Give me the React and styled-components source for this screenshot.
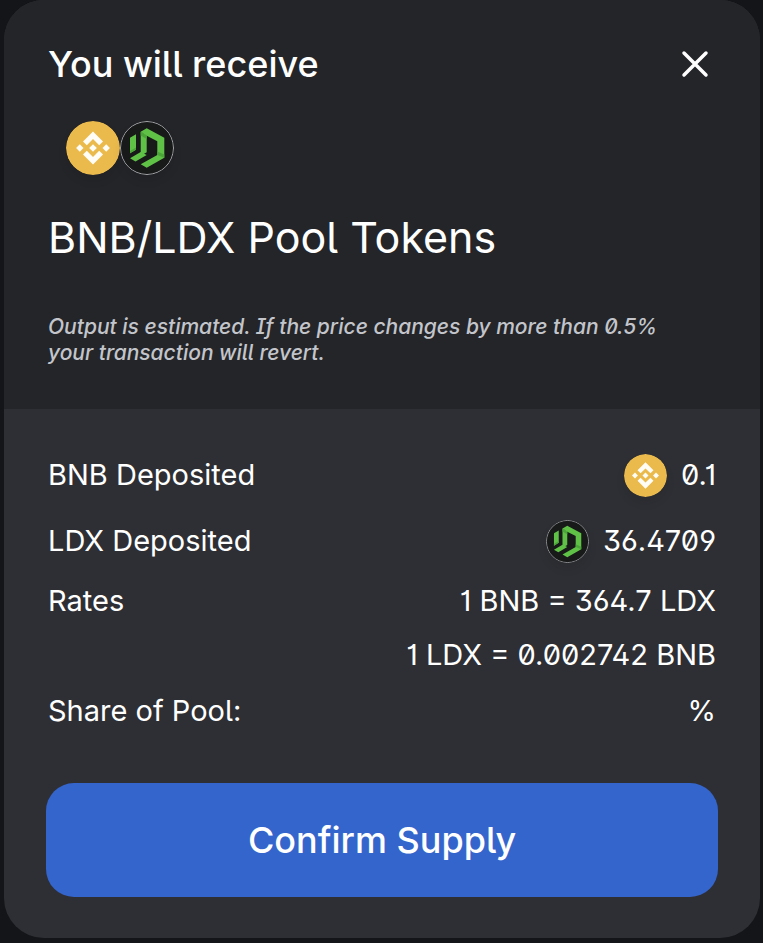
import React from "react";
import styled, { createGlobalStyle } from "styled-components";

const GlobalStyle = createGlobalStyle`
  * { box-sizing: border-box; }
  body {
    margin: 0;
    background: #141519;
    color: #ffffff;
    font-family: Inter, sans-serif;
    font-feature-settings: "ss01" 1, "ss02" 1, "cv01" 1, "cv03" 1;
  }
`;

const Dialog = styled.section`
  margin: 0 3px 4px 4px;
  border-radius: 40px;
  overflow: hidden;
  background: #2e2f34;
`;

const Summary = styled.div`
  padding: 42px 44px 43px;
  background: #242529;
`;

const Header = styled.header`
  display: flex;
  align-items: center;
  justify-content: space-between;
`;

const Title = styled.h1`
  margin: 0;
  font-size: 36px;
  line-height: 44px;
  font-weight: 500;
`;

const CloseButton = styled.button`
  display: flex;
  padding: 0;
  border: 0;
  background: none;
  color: inherit;
  cursor: pointer;
`;

const LogoPair = styled.div`
  display: flex;
  padding: 35px 18px 0;
`;

const Logo = styled.svg`
  display: block;
  flex: none;
  width: ${(p) => p.$size}px;
  height: ${(p) => p.$size}px;
  border-radius: 50%;
  box-shadow: 0 6px 10px rgba(0, 0, 0, 0.08);
`;

const PoolName = styled.h2`
  margin: 35px 0 0;
  font-size: 43px;
  line-height: 54px;
  font-weight: 400;
`;

const Note = styled.p`
  margin: 50px 0 0;
  padding-right: 24px;
  color: #c3c5cb;
  font-size: 21px;
  line-height: 26px;
  font-weight: 500;
  font-style: italic;
`;

const Details = styled.div`
  padding: 40px 42px 41px;
`;

const Rows = styled.dl`
  display: grid;
  gap: 14px;
  margin: 0 2px;
  font-size: 29px;
  line-height: 40px;
`;

const rowHeights = { tall: 52, medium: 44 };

const Row = styled.div`
  display: flex;
  justify-content: space-between;
  align-items: ${(p) => (p.$top ? "flex-start" : "center")};
  min-height: ${(p) => rowHeights[p.$height] || 40}px;
`;

const Label = styled.dt`
  margin: 0;
`;

const Values = styled.dd`
  display: grid;
  gap: 14px;
  margin: 0;
  text-align: right;
`;

const Amount = styled.span`
  display: flex;
  align-items: center;
  gap: 14px;
`;

const ConfirmButton = styled.button`
  display: block;
  width: 100%;
  margin-top: 50px;
  padding: 35px 16px;
  border: 0;
  border-radius: 28px;
  background: #3465cd;
  color: #ffffff;
  font: inherit;
  font-feature-settings: inherit;
  font-size: 36px;
  line-height: 44px;
  font-weight: 500;
  cursor: pointer;
`;

function BnbLogo({ size }) {
  return (
    <Logo $size={size} viewBox="0 0 54 54" aria-hidden="true">
      <circle cx="27" cy="27" r="27" fill="#ebba4d" />
      <g fill="#fffdf5">
        <path d="M27 10.5 37 20.5 33.2 24.3 27 18.1 20.8 24.3 17 20.5Z" />
        <path d="M27 43.5 37 33.5 33.2 29.7 27 35.9 20.8 29.7 17 33.5Z" />
        <path d="m27 23.2 3.8 3.8-3.8 3.8-3.8-3.8Z" />
        <path d="m13.8 23.3 3.7 3.7-3.7 3.7-3.7-3.7Z" />
        <path d="m40.2 23.3 3.7 3.7-3.7 3.7-3.7-3.7Z" />
      </g>
    </Logo>
  );
}

function LdxLogo({ size }) {
  return (
    <Logo $size={size} viewBox="0 0 54 54" aria-hidden="true">
      <circle cx="27" cy="27" r="26.5" fill="#181a1a" stroke="#a9aaad" />
      <g fill="#5fc146">
        <path d="M10 16.7 16 13.3V28.7L10 32.3Z" />
        <path d="M20.7 10.7 26.7 14.2V31.3L20.7 34.7Z" />
        <path d="M20.7 10.7 26.7 7.3 44.3 16.7V36.7L26.7 46.7 20.7 43.3 37.3 34V20.2L26.7 14.7Z" />
        <path d="M10 37.3 20.7 31.1 26.7 34 15.5 40.5Z" />
      </g>
      <path d="m20.7 10.7 6 4v3.3l-6-3.5Z" fill="#4aa637" />
      <path d="m37.3 30.5 7 3v3.2l-7-2.7Z" fill="#4aa637" />
      <path d="m10 30 6-3.5v2.2l-6 3.6Z" fill="#4aa637" />
    </Logo>
  );
}

export default function App() {
  return (
    <>
      <GlobalStyle />
      <Dialog role="dialog" aria-labelledby="dialog-title">
        <Summary>
          <Header>
            <Title id="dialog-title">You will receive</Title>
            <CloseButton type="button" aria-label="Close">
              <svg width="42" height="42" viewBox="0 0 42 42" fill="none" stroke="currentColor" strokeWidth="3.5" strokeLinecap="round">
                <path d="m10 10 22 22m0-22-22 22" />
              </svg>
            </CloseButton>
          </Header>
          <LogoPair>
            <BnbLogo size={54} />
            <LdxLogo size={54} />
          </LogoPair>
          <PoolName>BNB/LDX Pool Tokens</PoolName>
          <Note>
            Output is estimated. If the price changes by more than 0.5% your
            transaction will revert.
          </Note>
        </Summary>
        <Details>
          <Rows>
            <Row $height="tall">
              <Label>BNB Deposited</Label>
              <Values>
                <Amount>
                  <BnbLogo size={43} />
                  0.1
                </Amount>
              </Values>
            </Row>
            <Row $height="tall">
              <Label>LDX Deposited</Label>
              <Values>
                <Amount>
                  <LdxLogo size={43} />
                  36.4709
                </Amount>
              </Values>
            </Row>
            <Row $top>
              <Label>Rates</Label>
              <Values>
                <span>1 BNB = 364.7 LDX</span>
                <span>1 LDX = 0.002742 BNB</span>
              </Values>
            </Row>
            <Row $height="medium">
              <Label>Share of Pool:</Label>
              <Values>%</Values>
            </Row>
          </Rows>
          <ConfirmButton type="button">Confirm Supply</ConfirmButton>
        </Details>
      </Dialog>
    </>
  );
}
